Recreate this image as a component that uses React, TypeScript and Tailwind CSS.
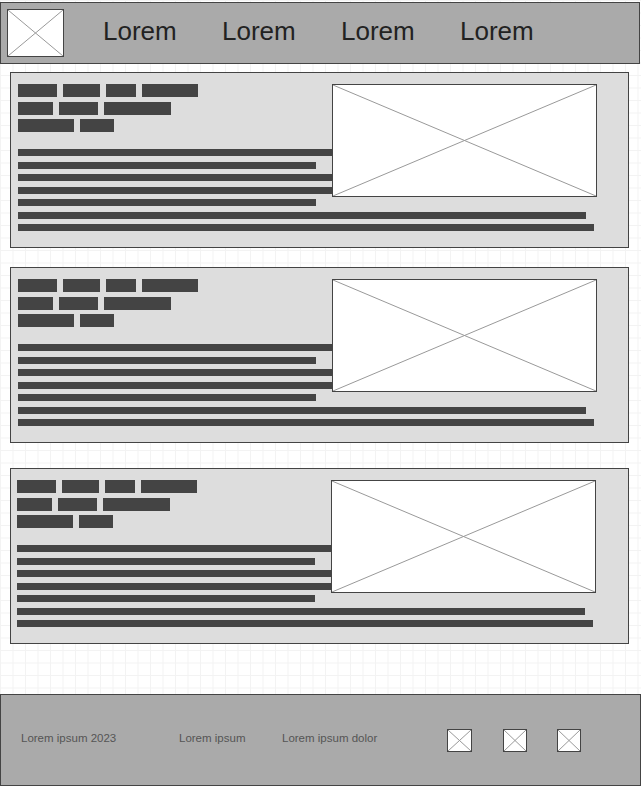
const tagRows = [
  [39, 37, 30, 56],
  [35, 39, 67],
  [56, 34],
];

const topLines = [314, 298, 314, 314, 298];
const bottomLines = [568, 576];

function Placeholder({ className }: { className: string }) {
  return (
    <div className={`relative border border-[#444] bg-white ${className}`}>
      <svg className="absolute inset-0 h-full w-full" preserveAspectRatio="none" viewBox="0 0 100 100">
        <line x1="0" y1="0" x2="100" y2="100" stroke="#999" strokeWidth="1" vectorEffect="non-scaling-stroke" />
        <line x1="100" y1="0" x2="0" y2="100" stroke="#999" strokeWidth="1" vectorEffect="non-scaling-stroke" />
      </svg>
    </div>
  );
}

function Card({ className }: { className: string }) {
  return (
    <div className={`ml-[10px] h-[176px] w-[619px] border border-[#444] bg-[#ddd] pt-[11px] ${className}`}>
      <div className="flex">
        <div className="w-[314px]">
          <div className="flex flex-col gap-[4.5px]">
            {tagRows.map((row, i) => (
              <div key={i} className="flex gap-[6px]">
                {row.map((w, j) => (
                  <div key={j} className="h-[13px] bg-[#444]" style={{ width: w }} />
                ))}
              </div>
            ))}
          </div>
          <div className="mt-[17px] flex flex-col gap-[5.5px]">
            {topLines.map((w, i) => (
              <div key={i} className="h-[7px] bg-[#444]" style={{ width: w }} />
            ))}
          </div>
        </div>
        <Placeholder className="h-[113px] w-[265px]" />
      </div>
      <div className="mt-[5.5px] flex flex-col gap-[5.5px]">
        {bottomLines.map((w, i) => (
          <div key={i} className="h-[7px] bg-[#444]" style={{ width: w }} />
        ))}
      </div>
    </div>
  );
}

export default function App() {
  return (
    <div className="min-h-[786px] w-[641px] bg-white bg-[image:linear-gradient(to_right,#f3f3f3_1px,transparent_1px),linear-gradient(to_bottom,#f3f3f3_1px,transparent_1px)] bg-[size:12.5px_12.5px] pt-[2px] font-['Liberation_Sans',Arial,sans-serif]">
      <header className="flex h-[62px] w-[640px] items-center border border-[#444] bg-[#aaa] pl-[6px]">
        <Placeholder className="h-[48px] w-[57px]" />
        <nav className="ml-[39px] flex pb-[4px] text-[26px] text-[#222]">
          {['Lorem', 'Lorem', 'Lorem', 'Lorem'].map((t, i) => (
            <span key={i} className="w-[119px]">{t}</span>
          ))}
        </nav>
      </header>

      <Card className="mt-[8px] pl-[7px]" />
      <Card className="mt-[19px] pl-[7px]" />
      <Card className="mt-[25px] pl-[6px]" />

      <footer className="mt-[50px] flex h-[92px] items-center border border-[#444] bg-[#aaa] pl-[20px] text-[11.5px] text-[#555]">
        <span className="w-[158px] pb-[2px]">Lorem ipsum 2023</span>
        <span className="w-[103px] pb-[2px]">Lorem ipsum</span>
        <span className="w-[165px] pb-[2px]">Lorem ipsum dolor</span>
        <Placeholder className="h-[23px] w-[25px]" />
        <Placeholder className="ml-[31px] h-[23px] w-[24px]" />
        <Placeholder className="ml-[30px] h-[23px] w-[24px]" />
      </footer>
    </div>
  );
}
